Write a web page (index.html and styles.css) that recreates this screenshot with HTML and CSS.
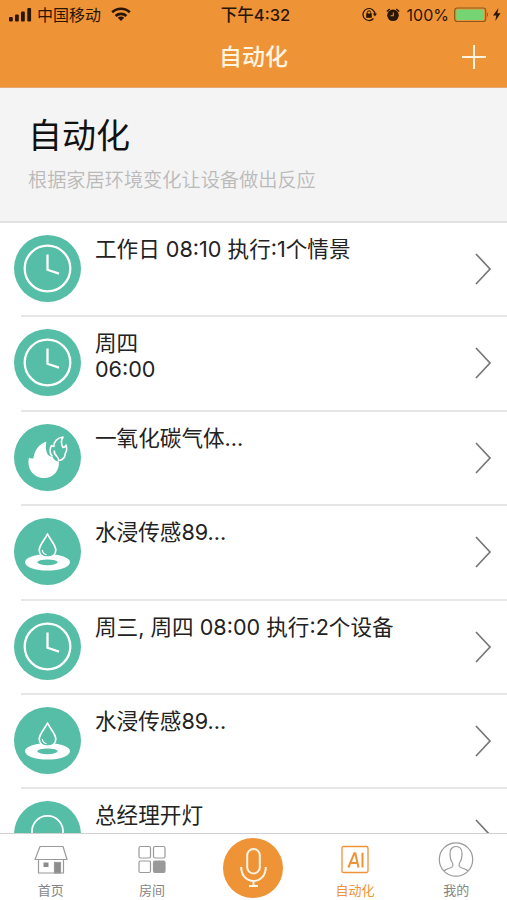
FILE: index.html
```html
<!DOCTYPE html>
<html lang="zh-CN">
<head>
    <meta charset="UTF-8">
    <meta name="viewport" content="width=device-width, initial-scale=1.0">
    <title>自动化</title>
    <link rel="stylesheet" href="styles.css">
</head>
<body>
    <!-- Shared icons -->
    <svg class="sprite" width="0" height="0">
        <symbol id="icon-clock" viewBox="0 0 67 67">
            <circle cx="33.5" cy="33.5" r="22.8" fill="none" stroke="#fff" stroke-width="2.3"/>
            <path d="M33.5 19.5v15.3l11.5 3.9" fill="none" stroke="#fff" stroke-width="2.3"/>
        </symbol>
        <symbol id="icon-gas" viewBox="0 0 67 67">
            <path d="M32.500 17.500C26 19.500 20.500 25.500 19.500 34C18 35 16.500 34.500 15 33.500C12.500 44 19 54 30 54C39.500 54 45.500 46.500 45 37.500C42 37.500 39.500 36 38.500 32.500C36 33 34 31.500 33 29C31.500 25 31.500 21.500 32.500 17.500Z" fill="#fff"/>
            <path d="M38.500 32C35.500 30.500 35.500 25 37.500 21.500C38.500 22 39 22.500 40 22.500C39.500 18 43 13.800 49 13C46.500 17 47 20 49 23.500C50.500 23.500 51.500 22.500 52 21C53 24 52.500 28 51 30C51.500 31 51 32 50.500 33C49 35.500 47 36.300 44.500 36.500C45 34.500 44 33.500 42.500 32C40.500 30.500 40 28.500 40.500 26.500" fill="none" stroke="#fff" stroke-width="1.600" stroke-linejoin="round"/>
        </symbol>
        <symbol id="icon-water" viewBox="0 0 67 67">
            <path fill-rule="evenodd" d="M11 44.300a22.500 8.300 0 1 0 45 0a22.500 8.300 0 1 0 -45 0zM23.300 44.300a10.200 2.900 0 1 0 20.400 0a10.200 2.900 0 1 0 -20.400 0z" fill="#fff"/>
            <path d="M33.500 16C31 21.500 25.200 27 25.200 32C25.200 36.500 28.700 39.200 33.500 39.200C38.300 39.200 41.800 36.500 41.800 32C41.800 27 36 21.500 33.500 16Z" fill="#56bda6" stroke="#fff" stroke-width="1.700" stroke-linejoin="round"/>
            <path d="M28.300 32c.3 2.600 1.800 4.200 4.200 4.700" fill="none" stroke="#fff" stroke-width="1.200"/>
        </symbol>
        <symbol id="icon-lamp" viewBox="0 0 67 67">
            <path d="M26 50v-6a15.500 15.500 0 1 1 15 0v6z" fill="none" stroke="#fff" stroke-width="1.800"/>
        </symbol>
        <symbol id="icon-arrow" viewBox="0 0 17 32">
            <path d="M1 1l14 15l-14 15" fill="none" stroke="#777" stroke-width="1.700"/>
        </symbol>
    </svg>

    <div class="app">
        <header class="header">
            <div class="status">
                <div class="status-left">
                    <svg width="23" height="14" viewBox="0 0 23 14" fill="#2a1606">
                        <rect x="0" y="9" width="3.800" height="4.500" rx="1"/>
                        <rect x="6" y="6.500" width="3.800" height="7" rx="1"/>
                        <rect x="12" y="3.500" width="3.800" height="10" rx="1"/>
                        <rect x="18.300" y="0" width="3.800" height="13.500" rx="1"/>
                    </svg>
                    <span class="carrier">中国移动</span>
                    <svg width="20" height="15" viewBox="0 0 20 15" fill="none" stroke="#2a1606" stroke-width="2.600">
                        <path d="M1.200 5.300a12.700 12.700 0 0 1 17.600 0"/>
                        <path d="M4.600 9a7.900 7.900 0 0 1 10.800 0"/>
                        <path d="M10 14l-3.200-3.300a4.600 4.600 0 0 1 6.400 0z" fill="#2a1606" stroke="none"/>
                    </svg>
                </div>
                <div class="time">下午4:32</div>
                <div class="status-right">
                    <svg width="15" height="15" viewBox="0 0 15 15">
                        <path d="M11.500 11.500a6 6 0 1 1 1.500-4" fill="none" stroke="#2a1606" stroke-width="1.200"/>
                        <path d="M10.800 6.500h4.200l-2.100 3z" fill="#2a1606"/>
                        <rect x="4.200" y="6.500" width="5.600" height="4.300" fill="#2a1606"/>
                        <path d="M5.300 7v-1.500a1.700 1.700 0 0 1 3.400 0v1.500" fill="none" stroke="#2a1606"/>
                    </svg>
                    <svg class="alarm" width="14" height="14" viewBox="0 0 14 14">
                        <circle cx="7" cy="7.300" r="5.800" fill="#2a1606"/>
                        <path d="M.8 3.500l3-2.500M13.200 3.500l-3-2.500" stroke="#2a1606" stroke-width="1.500"/>
                        <path d="M7.300 4.500v3.300h-2.800" fill="none" stroke="#ef9337" stroke-width="1.100"/>
                    </svg>
                    <span>100%</span>
                    <svg class="battery" width="36" height="16" viewBox="0 0 36 16">
                        <rect x=".7" y="1" width="31" height="13.500" rx="2.500" fill="none" stroke="#8a5a1c" stroke-width="1.200"/>
                        <rect x="2.300" y="2.600" width="27.800" height="10.300" rx="1" fill="#75d573"/>
                        <path d="M33 5.500q2 2.200 0 4.500z" fill="#8a5a1c"/>
                    </svg>
                    <svg width="8" height="13" viewBox="0 0 8 13">
                        <path d="M5.500 0l-5.500 7.500h3.300l-1 5.500l5.200-7.700h-3.200z" fill="#2a1606"/>
                    </svg>
                </div>
            </div>
            <div class="nav">
                <h1>自动化</h1>
                <svg width="24" height="24" viewBox="0 0 24 24">
                    <path d="M12 0v24M0 12h24" stroke="#fff5e0" stroke-width="2"/>
                </svg>
            </div>
        </header>

        <section class="banner">
            <h2>自动化</h2>
            <p>根据家居环境变化让设备做出反应</p>
        </section>

        <ul class="list">
            <li class="item">
                <svg class="item-icon"><use href="#icon-clock"/></svg>
                <div class="item-body">工作日 08:10 执行:1个情景</div>
                <svg class="arrow"><use href="#icon-arrow"/></svg>
            </li>
            <li class="item">
                <svg class="item-icon"><use href="#icon-clock"/></svg>
                <div class="item-body">周四<br>06:00</div>
                <svg class="arrow"><use href="#icon-arrow"/></svg>
            </li>
            <li class="item">
                <svg class="item-icon"><use href="#icon-gas"/></svg>
                <div class="item-body">一氧化碳气体...</div>
                <svg class="arrow"><use href="#icon-arrow"/></svg>
            </li>
            <li class="item">
                <svg class="item-icon"><use href="#icon-water"/></svg>
                <div class="item-body">水浸传感89...</div>
                <svg class="arrow"><use href="#icon-arrow"/></svg>
            </li>
            <li class="item">
                <svg class="item-icon"><use href="#icon-clock"/></svg>
                <div class="item-body">周三, 周四 08:00 执行:2个设备</div>
                <svg class="arrow"><use href="#icon-arrow"/></svg>
            </li>
            <li class="item">
                <svg class="item-icon"><use href="#icon-water"/></svg>
                <div class="item-body">水浸传感89...</div>
                <svg class="arrow"><use href="#icon-arrow"/></svg>
            </li>
            <li class="item">
                <svg class="item-icon"><use href="#icon-lamp"/></svg>
                <div class="item-body">总经理开灯</div>
                <svg class="arrow"><use href="#icon-arrow"/></svg>
            </li>
        </ul>

        <nav class="tabs">
            <a class="tab">
                <svg width="36" height="36" viewBox="0 0 36 36" fill="none" stroke="#9a9a9a" stroke-width="1.200">
                    <path d="M7 5.500h23l4 13h-32zM5.500 18.500v13.500h25v-13.500" stroke-linejoin="round"/>
                    <rect x="10.500" y="21.500" width="5" height="4.500" fill="#8c8c8c" stroke="none"/>
                    <rect x="21.500" y="21.500" width="6" height="10.500" fill="#8c8c8c"/>
                </svg>
                <span>首页</span>
            </a>
            <a class="tab">
                <svg width="36" height="36" viewBox="0 0 36 36" fill="none" stroke="#9a9a9a" stroke-width="1.200">
                    <rect x="5" y="5.500" width="11.500" height="11.500" rx="1.500"/>
                    <rect x="19.500" y="5.500" width="11.500" height="11.500" rx="1.500"/>
                    <rect x="5" y="20" width="11.500" height="11.500" rx="1.500"/>
                    <rect x="19.500" y="20" width="11.500" height="11.500" rx="1.500" fill="#999"/>
                </svg>
                <span>房间</span>
            </a>
            <a class="tab">
                <div class="mic">
                    <svg width="60" height="60" viewBox="0 0 60 60" fill="none" stroke="#fff5e6" stroke-width="2">
                        <rect x="24.200" y="11" width="12.600" height="24.500" rx="6.300"/>
                        <path d="M18.200 29c0 8.500 5.300 14 12.300 14s12.300-5.500 12.300-14M30.500 43v5M26 48h9"/>
                    </svg>
                </div>
            </a>
            <a class="tab active">
                <svg width="36" height="36" viewBox="0 0 36 36" fill="none" stroke="#ef9337" stroke-width="1.300">
                    <rect x="5" y="5.500" width="26" height="26" rx="1.500"/>
                    <path d="M11.300 26.500l6-14.200h1l3.200 14.200M13.500 22h6.500M25.500 11.800v14.700" stroke-width="2"/>
                </svg>
                <span>自动化</span>
            </a>
            <a class="tab">
                <svg width="36" height="36" viewBox="0 0 36 36" fill="none" stroke="#9a9a9a" stroke-width="1.200">
                    <circle cx="18" cy="18.500" r="16.700"/>
                    <path d="M6 30c2.500-3 7.500-2.500 8.700-4.500c.6-1.500.3-3-.7-4.500c-1.500-2-2-5-2-8.500c0-4.500 2.500-7 6-7s6 2.500 6 7c0 3.500-.5 6.500-2 8.500c-1 1.500-1.300 3-.7 4.500c1.200 2 6.200 1.500 8.700 4.500"/>
                </svg>
                <span>我的</span>
            </a>
        </nav>
    </div>
</body>
</html>
```
FILE: styles.css
```css
* {
    box-sizing: border-box;
}
body {
    margin: 0;
    background: #fff;
    color: #222;
    font-family: Inter, "Noto Sans CJK SC", sans-serif;
}
h1, h2, p, ul {
    margin: 0;
    padding: 0;
}
svg {
    display: block;
    flex-shrink: 0;
}
.sprite {
    display: none;
}
.app {
    display: flex;
    flex-direction: column;
    height: 900px;
    overflow: hidden;
}
.header {
    height: 88px;
    flex-shrink: 0;
    background: #ef9337;
    border-bottom: 1px solid #e3a873;
}
.status {
    display: grid;
    grid-template-columns: 1fr auto 1fr;
    align-items: center;
    height: 29px;
    padding: 0 6px 0 9px;
    font-size: 16px;
    line-height: 28px;
    color: #2a1606;
}
.status-left,
.status-right {
    display: flex;
    align-items: center;
}
.status-right {
    justify-content: flex-end;
}
.carrier {
    margin: 0 10px 0 5px;
}
.time {
    padding-left: 1px;
    font-size: 16.5px;
    font-weight: 500;
}
.alarm {
    margin: 0 7px 0 9px;
}
.battery {
    margin: 0 3px 0 5px;
}
.nav {
    display: grid;
    grid-template-columns: 1fr auto 1fr;
    align-items: center;
    height: 56px;
    padding: 0 21px;
}
.nav h1 {
    grid-column: 2;
    padding-top: 1px;
    font-size: 23px;
    font-weight: 500;
    line-height: 55px;
    color: #fff5e0;
}
.nav svg {
    justify-self: end;
}
.banner {
    height: 135px;
    flex-shrink: 0;
    padding: 23px 28px 0;
    background: #f4f4f4;
    border-bottom: 2px solid #e2e2e2;
}
.banner h2 {
    font-size: 34px;
    font-weight: 400;
    line-height: 50px;
    color: #111;
}
.banner p {
    margin-top: 5px;
    font-size: 19.2px;
    font-weight: 350;
    line-height: 28px;
    color: #bababa;
}
.list {
    flex: 1;
    min-height: 0;
    overflow: hidden;
    list-style: none;
}
.item {
    display: flex;
    height: 94.4px;
    padding: 12px 15px 0 14px;
    background: linear-gradient(#e6e6e6, #e6e6e6) 21px 100% / 100% 2px no-repeat;
}
.item-icon {
    width: 67px;
    height: 67px;
    border-radius: 50%;
    background: #56bda6;
}
.item-body {
    flex: 1;
    margin-left: 14px;
    padding-top: 1px;
    font-size: 21.6px;
    line-height: 26px;
}
.arrow {
    width: 17px;
    height: 32px;
    margin-top: 18px;
}
.tabs {
    display: grid;
    grid-template-columns: repeat(5, 1fr);
    height: 67px;
    flex-shrink: 0;
    background: #fff;
    border-top: 1px solid #d0d0d0;
}
.tab {
    display: flex;
    flex-direction: column;
    align-items: center;
    padding-top: 7px;
    font-size: 13px;
    line-height: 18px;
    color: #858585;
}
.tab span {
    margin-top: 4px;
}
.tab.active {
    color: #ef9337;
}
.mic {
    width: 60px;
    height: 60px;
    margin-top: -3px;
    border-radius: 50%;
    background: #ef9337;
}
```
